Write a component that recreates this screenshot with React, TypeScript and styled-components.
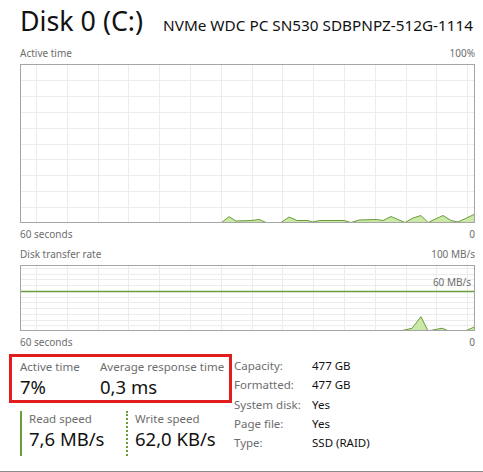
import React from 'react';
import styled, { createGlobalStyle } from 'styled-components';

const GlobalStyle = createGlobalStyle`
  html, body {
    margin: 0;
    padding: 0;
    background: #ffffff;
    overflow: hidden;
  }
  body {
    font-family: 'Noto Sans', 'Open Sans', sans-serif;
    color: #000000;
  }
`;

type Point = [number, number];

const GRID_START = 16;
const GRID_STEP = 30.8;
const CHART_WIDTH = 455;

const activePoints: Point[] = [
  [201, 159], [209, 152.7], [216, 157], [231, 156.5], [239, 155.5], [246, 158.5],
  [261, 158.5], [269, 153], [277, 156.5], [288, 156.5], [292, 158], [300, 156.5],
  [324, 156.5], [331, 158.5], [339, 156], [356, 155.5], [363, 156.5], [371, 152.5],
  [385, 158.5], [393, 154], [401, 151.5], [408, 158.5], [423, 151.5], [431, 156.5],
  [438, 158], [455, 150],
];

const transferPoints: Point[] = [
  [380, 66], [392, 63.3], [401, 51.7], [408, 66], [422, 63.2], [429, 66],
  [445, 66], [455, 61.7],
];

const range = (n: number) => Array.from({ length: n }, (_, i) => i);

interface GraphProps {
  height: number;
  rows: number[];
  points: Point[];
  limit?: { y: number; label: string };
}

const Graph = ({ height, rows, points, limit }: GraphProps) => {
  const cols = range(15).map((i) => Math.round(GRID_START + i * GRID_STEP) + 0.5);
  const first = points[0];
  const last = points[points.length - 1];
  const area =
    `M${first[0]},${height} ` +
    points.map(([x, y]) => `L${x},${y}`).join(' ') +
    ` L${last[0]},${height} Z`;
  const edge = 'M' + points.map(([x, y]) => `${x},${y}`).join(' L');

  return (
    <GraphBox $height={height}>
      <svg width={CHART_WIDTH} height={height} viewBox={`0 0 ${CHART_WIDTH} ${height}`}>
        {rows.map((y) => (
          <line key={`r${y}`} x1={0} x2={CHART_WIDTH} y1={Math.round(y) + 0.5} y2={Math.round(y) + 0.5} stroke="#ececec" />
        ))}
        {cols.map((x) => (
          <line key={`c${x}`} x1={x} x2={x} y1={0} y2={height} stroke="#ececec" />
        ))}
        <path d={area} fill="#cbe8a9" />
        <path d={edge} fill="none" stroke="#6a9c3c" strokeWidth={1} strokeLinejoin="round" />
        {limit && (
          <>
            <line x1={0} x2={CHART_WIDTH} y1={limit.y} y2={limit.y} stroke="#6a9c3c" strokeWidth={1.5} />
            <text
              x={CHART_WIDTH - 4}
              y={limit.y - 6}
              textAnchor="end"
              fontSize="10"
              fill="#6d6d6d"
              fontFamily="'Noto Sans', sans-serif"
            >
              {limit.label}
            </text>
          </>
        )}
        <rect x={0.5} y={0.5} width={CHART_WIDTH - 1} height={height - 1} fill="none" stroke="#a5a5a5" />
      </svg>
    </GraphBox>
  );
};

const App = () => {
  const activeRows = range(9).map((i) => 15.9 * (i + 1));
  const transferRows = range(11).map((i) => 66 - 5.75 * (i + 1));

  return (
    <>
      <GlobalStyle />
      <Page>
        <Header>
          <Title>Disk 0 (C:)</Title>
          <Model>NVMe WDC PC SN530 SDBPNPZ-512G-1114</Model>
        </Header>

        <LabelRow>
          <span>Active time</span>
          <span>100%</span>
        </LabelRow>
        <Graph height={159} rows={activeRows} points={activePoints} />
        <LabelRow $below>
          <span>60 seconds</span>
          <span>0</span>
        </LabelRow>

        <LabelRow $gap={4}>
          <span>Disk transfer rate</span>
          <span>100 MB/s</span>
        </LabelRow>
        <Graph
          height={66}
          rows={transferRows}
          points={transferPoints}
          limit={{ y: 26.5, label: '60 MB/s' }}
        />
        <LabelRow $below>
          <span>60 seconds</span>
          <span>0</span>
        </LabelRow>

        <Stats>
          <div>
            <Highlight>
              <Metric $width={80}>
                <MetricLabel>Active time</MetricLabel>
                <MetricValue>7%</MetricValue>
              </Metric>
              <Metric>
                <MetricLabel>Average response time</MetricLabel>
                <MetricValue>0,3 ms</MetricValue>
              </Metric>
            </Highlight>
            <Speeds>
              <Speed $width={106}>
                <MetricLabel>Read speed</MetricLabel>
                <MetricValue>7,6 MB/s</MetricValue>
              </Speed>
              <Speed $dotted>
                <MetricLabel>Write speed</MetricLabel>
                <MetricValue>62,0 KB/s</MetricValue>
              </Speed>
            </Speeds>
          </div>
          <InfoTable>
            <InfoKey>Capacity:</InfoKey>
            <InfoValue>477 GB</InfoValue>
            <InfoKey>Formatted:</InfoKey>
            <InfoValue>477 GB</InfoValue>
            <InfoKey>System disk:</InfoKey>
            <InfoValue>Yes</InfoValue>
            <InfoKey>Page file:</InfoKey>
            <InfoValue>Yes</InfoValue>
            <InfoKey>Type:</InfoKey>
            <InfoValue>SSD (RAID)</InfoValue>
          </InfoTable>
        </Stats>

        <Footer>
          <FooterLink>Open Resource Monitor</FooterLink>
        </Footer>
      </Page>
    </>
  );
};

export default App;

const Page = styled.div`
  width: 483px;
  height: 472px;
  box-sizing: border-box;
  padding: 0 8px 0 20px;
  overflow: hidden;
`;

const Header = styled.div`
  display: flex;
  align-items: baseline;
  gap: 20px;
  height: 45px;
  padding-top: 5px;
  box-sizing: border-box;
  white-space: nowrap;
`;

const Title = styled.div`
  font-size: 26.8px;
  line-height: 32px;
  color: #111111;
`;

const Model = styled.div`
  font-size: 15.3px;
  line-height: 20px;
  color: #111111;
`;

const LabelRow = styled.div<{ $below?: boolean; $gap?: number }>`
  display: flex;
  justify-content: space-between;
  height: 16px;
  line-height: 16px;
  font-size: 10px;
  color: #6d6d6d;
  margin-top: ${(p) => (p.$below ? 3 : p.$gap ?? 0)}px;
  margin-bottom: ${(p) => (p.$below ? 0 : 3)}px;
`;

const GraphBox = styled.div<{ $height: number }>`
  width: ${CHART_WIDTH}px;
  height: ${(p) => p.$height}px;

  svg {
    display: block;
  }
`;

const Stats = styled.div`
  display: flex;
  margin-left: -11px;
  margin-top: 4px;
  gap: 2px;
`;

const Highlight = styled.div`
  display: flex;
  width: 223px;
  box-sizing: border-box;
  border: 3px solid #e21d1d;
  padding: 2px 0 1px 8px;
  white-space: nowrap;
`;

const Metric = styled.div<{ $width?: number }>`
  display: flex;
  flex-direction: column;
  width: ${(p) => (p.$width ? `${p.$width}px` : 'auto')};
`;

const MetricLabel = styled.div`
  font-size: 11.5px;
  line-height: 16px;
  color: #6d6d6d;
  white-space: nowrap;
`;

const MetricValue = styled.div`
  font-size: 18.5px;
  line-height: 24px;
  color: #111111;
  white-space: nowrap;
`;

const Speeds = styled.div`
  display: flex;
  margin-top: 8px;
  padding-left: 11px;
`;

const Speed = styled.div<{ $width?: number; $dotted?: boolean }>`
  box-sizing: border-box;
  width: ${(p) => (p.$width ? `${p.$width}px` : 'auto')};
  padding-left: 7px;
  padding-bottom: 5px;
  border-left: 2px ${(p) => (p.$dotted ? 'dotted' : 'solid')} #6a9c3c;
`;

const InfoTable = styled.div`
  display: grid;
  grid-template-columns: 78px auto;
  align-content: start;
  padding-top: 2px;
  font-size: 11.5px;
  line-height: 19.3px;
  white-space: nowrap;
`;

const InfoKey = styled.div`
  color: #6d6d6d;
`;

const InfoValue = styled.div`
  color: #111111;
`;

const Footer = styled.div`
  margin-top: 15px;
  margin-left: -20px;
  margin-right: -8px;
  border-top: 1px solid #8c8c8c;
  padding-left: 170px;
`;

const FooterLink = styled.div`
  font-size: 13px;
  line-height: 16px;
  margin-top: -2px;
  color: #1a1a1a;
`;
